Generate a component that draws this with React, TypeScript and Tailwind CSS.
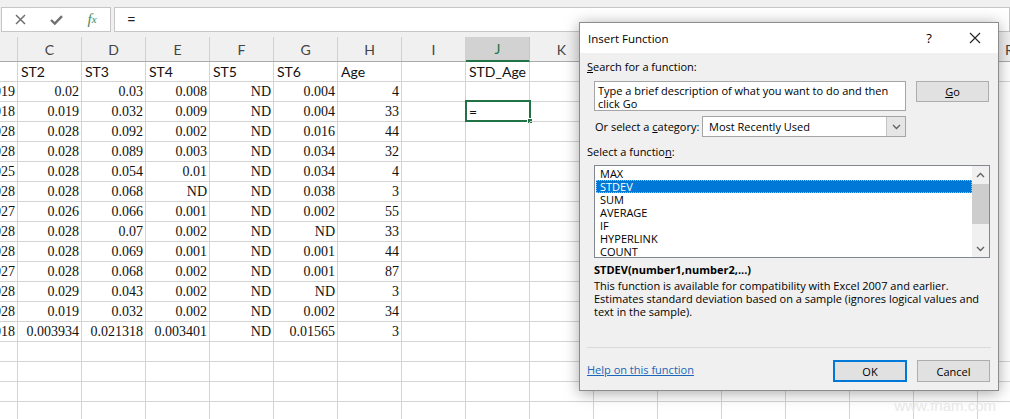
import React from 'react'

const COLS = ['C', 'D', 'E', 'F', 'G', 'H', 'I', 'J', 'K', 'L', 'M', 'N', 'O', 'P', 'Q', 'R']

// B (clipped) .. H values per row
const DATA: string[][] = [
  ['0.019', '0.02', '0.03', '0.008', 'ND', '0.004', '4'],
  ['0.018', '0.019', '0.032', '0.009', 'ND', '0.004', '33'],
  ['0.028', '0.028', '0.092', '0.002', 'ND', '0.016', '44'],
  ['0.028', '0.028', '0.089', '0.003', 'ND', '0.034', '32'],
  ['0.025', '0.028', '0.054', '0.01', 'ND', '0.034', '4'],
  ['0.028', '0.028', '0.068', 'ND', 'ND', '0.038', '3'],
  ['0.027', '0.026', '0.066', '0.001', 'ND', '0.002', '55'],
  ['0.028', '0.028', '0.07', '0.002', 'ND', 'ND', '33'],
  ['0.028', '0.028', '0.069', '0.001', 'ND', '0.001', '44'],
  ['0.027', '0.028', '0.068', '0.002', 'ND', '0.001', '87'],
  ['0.028', '0.029', '0.043', '0.002', 'ND', 'ND', '3'],
  ['0.028', '0.019', '0.032', '0.002', 'ND', '0.002', '34'],
  ['0.018', '0.003934', '0.021318', '0.003401', 'ND', '0.01565', '3'],
]

const LABELS = ['', 'ST2', 'ST3', 'ST4', 'ST5', 'ST6', 'Age', '', 'STD_Age']

const FUNCS = ['MAX', 'STDEV', 'SUM', 'AVERAGE', 'IF', 'HYPERLINK', 'COUNT']

const cellBase = 'h-[20px] shrink-0 border-r border-b border-[#d4d4d4] flex items-center'

function NumCell({ value, first }: { value: string; first?: boolean }) {
  return (
    <div
      className={`${cellBase} ${first ? 'w-[18px] overflow-hidden' : 'w-[64px]'} justify-end pr-[2px] font-['Liberation_Serif',serif] text-[14px] text-[#111]`}
    >
      <span className="whitespace-nowrap">{value}</span>
    </div>
  )
}

function LabelCell({ value, first }: { value: string; first?: boolean }) {
  return (
    <div
      className={`${cellBase} ${first ? 'w-[18px] overflow-hidden' : 'w-[64px]'} pl-[3px] font-['Lato',sans-serif] text-[14px] text-[#111]`}
    >
      <span className="whitespace-nowrap">{value}</span>
    </div>
  )
}

function EmptyCell({ first, children }: { first?: boolean; children?: React.ReactNode }) {
  return <div className={`${cellBase} relative ${first ? 'w-[18px]' : 'w-[64px]'}`}>{children}</div>
}

function ActiveCell() {
  return (
    <EmptyCell>
      <div className="absolute -left-[1px] -top-[2px] w-[66px] h-[22px] border-2 border-[#217346] flex items-center pl-[2px] font-['Lato',sans-serif] text-[14px] text-[#111]">
        =
        <div className="absolute -right-[4px] -bottom-[4px] w-[6px] h-[6px] bg-[#217346] border border-white" />
      </div>
    </EmptyCell>
  )
}

function FormulaBar() {
  return (
    <div className="h-[37px] shrink-0 bg-[#f0f0f0] flex items-start pt-[7px]">
      <div className="ml-[1px] w-[110px] h-[25px] bg-white border border-[#c6c6c6] flex items-center">
        <div className="w-[36px] flex justify-center">
          <svg width="11" height="11" viewBox="0 0 11 11">
            <path d="M1 1 L10 10 M10 1 L1 10" stroke="#707070" strokeWidth="1.5" />
          </svg>
        </div>
        <div className="w-[36px] flex justify-center">
          <svg width="13" height="10" viewBox="0 0 13 10">
            <path d="M1 5 L4.8 8.6 L12 1.2" stroke="#707070" strokeWidth="2.4" fill="none" />
          </svg>
        </div>
        <div className="w-[36px] flex justify-center font-['Liberation_Serif',serif] italic text-[#3b8a5e] text-[15px] leading-none">
          f<span className="text-[11px] translate-y-[2px]">x</span>
        </div>
      </div>
      <div className="ml-[3px] flex-1 h-[25px] bg-white border border-[#c6c6c6] flex items-center pl-[12px] font-['Lato',sans-serif] text-[15px] text-[#222]">
        =
      </div>
    </div>
  )
}

function ColumnHeaders() {
  return (
    <div className="flex h-[25px] shrink-0 bg-[#f0f0f0] border-b border-[#ababab] font-['Lato',sans-serif] text-[14px] text-[#444]">
      <div className="w-[18px] shrink-0 border-r border-[#d0d0d0]" />
      {COLS.map(c =>
        c === 'J' ? (
          <div
            key={c}
            className="w-[64px] shrink-0 border-r border-[#c6c6c6] bg-[#d2d2d2] border-b-2 border-b-[#217346] -mb-px flex items-center justify-center text-[#217346]"
          >
            {c}
          </div>
        ) : (
          <div key={c} className="w-[64px] shrink-0 border-r border-[#d0d0d0] flex items-center justify-center">
            {c}
          </div>
        )
      )}
    </div>
  )
}

function Sheet() {
  const extra = COLS.length - 7 // columns after H, I..R
  return (
    <div className="flex flex-col">
      {/* labels row */}
      <div className="flex">
        {LABELS.map((l, i) => (l ? <LabelCell key={i} value={l} first={i === 0} /> : <EmptyCell key={i} first={i === 0} />))}
        {Array.from({ length: COLS.length - 8 }).map((_, i) => (
          <EmptyCell key={'e' + i} />
        ))}
      </div>
      {DATA.map((row, r) => (
        <div key={r} className="flex">
          {row.map((v, i) => (
            <NumCell key={i} value={v} first={i === 0} />
          ))}
          {Array.from({ length: extra }).map((_, i) => (i === 1 && r === 1 ? <ActiveCell key={'e' + i} /> : <EmptyCell key={'e' + i} />))}
        </div>
      ))}
      {Array.from({ length: 4 }).map((_, r) => (
        <div key={'blank' + r} className="flex">
          <EmptyCell first />
          {COLS.map(c => (
            <EmptyCell key={c} />
          ))}
        </div>
      ))}
    </div>
  )
}

function Chevron({ up }: { up?: boolean }) {
  return (
    <svg width="9" height="6" viewBox="0 0 9 6">
      <path d={up ? 'M1 5 L4.5 1.5 L8 5' : 'M1 1 L4.5 4.5 L8 1'} stroke="#606060" strokeWidth="1.3" fill="none" />
    </svg>
  )
}

function InsertFunctionDialog() {
  return (
    <div className="absolute left-[579px] top-[22px] w-[420px] h-[369px] bg-[#f0f0f0] border border-[#8c8c8c] shadow-[0_2px_14px_rgba(0,0,0,0.35)] flex flex-col font-['Open_Sans',sans-serif] text-[11px] leading-[13px] text-black">
      <div className="h-[30px] shrink-0 bg-white flex items-center pl-[8px]">
        <span className="text-[11.5px]">Insert Function</span>
        <div className="ml-auto flex">
          <div className="w-[46px] flex justify-center text-[13px]">?</div>
          <div className="w-[46px] flex justify-center items-center">
            <svg width="12" height="12" viewBox="0 0 12 12">
              <path d="M1 1 L11 11 M11 1 L1 11" stroke="#222" strokeWidth="1.1" />
            </svg>
          </div>
        </div>
      </div>

      <div className="flex flex-col px-[7px]">
        <div className="mt-[7px]">
          <span className="underline">S</span>earch for a function:
        </div>

        <div className="mt-[8px] flex items-start">
          <div className="ml-[7px] w-[312px] h-[30px] bg-white border border-[#a5a5a5] pt-[2px] px-[3px]">
            <div className="whitespace-nowrap">Type a brief description of what you want to do and then</div>
            <div>click Go</div>
          </div>
          <div className="ml-[10px] w-[73px] h-[21px] bg-[#e1e1e1] border border-[#adadad] flex items-center justify-center">
            <span>
              <span className="underline">G</span>o
            </span>
          </div>
        </div>

        <div className="mt-[5px] h-[21px] flex items-center">
          <span className="ml-[8px] w-[107px] shrink-0 whitespace-nowrap">
            Or select a <span className="underline">c</span>ategory:
          </span>
          <div className="w-[204px] h-[21px] bg-white border border-[#a5a5a5] flex items-center">
            <span className="pl-[6px] flex-1">Most Recently Used</span>
            <div className="w-[19px] h-full bg-[#e5e5e5] border-l border-[#c4c4c4] flex items-center justify-center">
              <Chevron />
            </div>
          </div>
        </div>

        <div className="mt-[8px]">
          Select a functio<span className="underline">n</span>:
        </div>

        <div className="mt-[7px] ml-[7px] w-[396px] h-[93px] bg-white border border-[#828790] flex overflow-hidden">
          <div className="flex-1 pt-[1px] pl-[1px]">
            {FUNCS.map(f =>
              f === 'STDEV' ? (
                <div key={f} className="h-[13px] pl-[3px] bg-[#0078d7] text-white border border-dotted border-[#8fc3ee] flex items-center">
                  {f}
                </div>
              ) : (
                <div key={f} className="h-[13px] pl-[4px] flex items-center">
                  {f}
                </div>
              )
            )}
          </div>
          <div className="w-[17px] shrink-0 bg-[#f0f0f0] flex flex-col">
            <div className="h-[17px] flex items-center justify-center">
              <Chevron up />
            </div>
            <div className="mt-[1px] h-[40px] bg-[#cdcdcd]" />
            <div className="mt-auto h-[17px] flex items-center justify-center">
              <Chevron />
            </div>
          </div>
        </div>

        <div className="mt-[5px] ml-[7px] font-bold">STDEV(number1,number2,...)</div>
        <div className="mt-[3px] ml-[7px]">
          <div className="whitespace-nowrap">This function is available for compatibility with Excel 2007 and earlier.</div>
          <div className="whitespace-nowrap">Estimates standard deviation based on a sample (ignores logical values and</div>
          <div className="whitespace-nowrap">text in the sample).</div>
        </div>

        <div className="mt-[29px] h-px bg-[#dadada]" />

        <div className="mt-[12px] flex items-center">
          <span className="-mt-[4px] text-[#1a66b8] underline">Help on this function</span>
          <div className="ml-auto w-[74px] h-[22px] bg-[#e1e1e1] border-2 border-[#0078d7] flex items-center justify-center">
            OK
          </div>
          <div className="ml-[10px] mr-[1px] w-[73px] h-[22px] bg-[#e1e1e1] border border-[#adadad] flex items-center justify-center">
            Cancel
          </div>
        </div>
      </div>
    </div>
  )
}

export default function App() {
  return (
    <div className="relative w-[1010px] h-[419px] overflow-hidden bg-white">
      <FormulaBar />
      <ColumnHeaders />
      <Sheet />
      <InsertFunctionDialog />
      <div className="absolute right-[14px] bottom-[2px] font-['Liberation_Sans',sans-serif] text-[15px] text-[#e8e8e8]">
        www.frlam.com
      </div>
    </div>
  )
}
